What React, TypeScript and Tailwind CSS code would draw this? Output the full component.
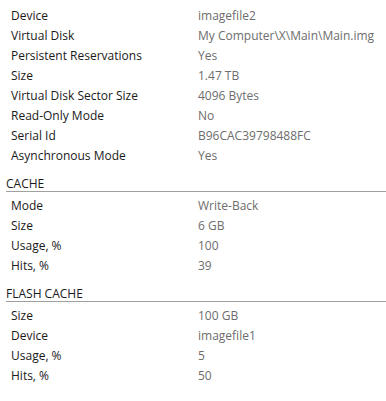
import React from "react";

type Row = [string, string];

const main: Row[] = [
  ["Device", "imagefile2"],
  ["Virtual Disk", "My Computer\\X\\Main\\Main.img"],
  ["Persistent Reservations", "Yes"],
  ["Size", "1.47 TB"],
  ["Virtual Disk Sector Size", "4096 Bytes"],
  ["Read-Only Mode", "No"],
  ["Serial Id", "B96CAC39798488FC"],
  ["Asynchronous Mode", "Yes"],
];

const cache: Row[] = [
  ["Mode", "Write-Back"],
  ["Size", "6 GB"],
  ["Usage, %", "100"],
  ["Hits, %", "39"],
];

const flash: Row[] = [
  ["Size", "100 GB"],
  ["Device", "imagefile1"],
  ["Usage, %", "5"],
  ["Hits, %", "50"],
];

function Rows({ rows }: { rows: Row[] }) {
  return (
    <div className="flex flex-col">
      {rows.map(([k, v], i) => (
        <div key={i} className="flex h-[20px] items-center">
          <div className="w-[198px] pl-[11px] text-[#1a1a1a]">{k}</div>
          <div className="text-[#6d6d6d]">{v}</div>
        </div>
      ))}
    </div>
  );
}

function Heading({ title }: { title: string }) {
  return (
    <div className="ml-[6px] mt-[11px] mb-[4px] border-b border-[#a0a0a0] leading-[14px] text-[#1a1a1a]">
      {title}
    </div>
  );
}

export default function App() {
  return (
    <div
      className="w-[386px] h-[401px] bg-white pt-[6px] text-[12px]"
      style={{ fontFamily: '"Open Sans", "Noto Sans", sans-serif' }}
    >
      <Rows rows={main} />
      <Heading title="CACHE" />
      <Rows rows={cache} />
      <Heading title="FLASH CACHE" />
      <Rows rows={flash} />
    </div>
  );
}
